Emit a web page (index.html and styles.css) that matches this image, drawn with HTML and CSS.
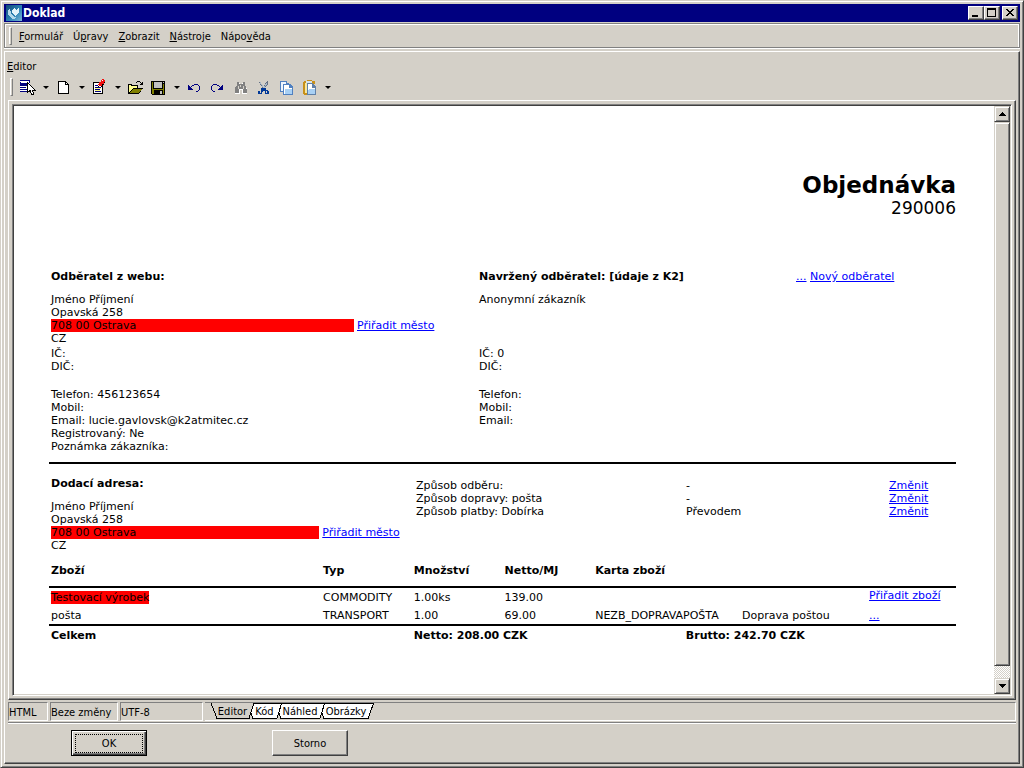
FILE: index.html
```html
<!DOCTYPE html>
<html lang="cs">
<head>
<meta charset="utf-8">
<title>Doklad</title>
<link rel="stylesheet" href="styles.css">
</head>
<body>
<div class="window">
  <header class="titlebar">
    <svg class="app-icon" width="16" height="16" viewBox="0 0 16 16"><defs><linearGradient id="sky" x1="0" y1="0" x2="1" y2="1"><stop offset="0" stop-color="#0f4775"/><stop offset=".55" stop-color="#2c83b4"/><stop offset="1" stop-color="#7db7d6"/></linearGradient></defs><rect width="16" height="16" fill="url(#sky)"/><path d="M4 3L2 6v4l4 4 5-1-4-2-2-3z" fill="#b4d8ea"/><path d="M7 4l2-1 1 2 3-2v4l-4 4-3-4z" fill="#e4f3fa"/></svg>
    <h1 class="window-title">Doklad</h1>
    <div class="window-buttons">
      <button class="win-btn" aria-label="Minimalizovat"><svg width="12" height="10" viewBox="0 0 12 10"><path d="M2 7h6v2H2z"/></svg></button>
      <button class="win-btn" aria-label="Maximalizovat"><svg width="12" height="10" viewBox="0 0 12 10"><path d="M1 0h9v9H1zM2 2v6h7V2z" fill-rule="evenodd"/></svg></button>
      <button class="win-btn win-close" aria-label="Zavřít"><svg width="12" height="10" viewBox="0 0 12 10"><path d="M2 1h2v1h1v1h2V2h1V1h2v1H9v1H8v1H7v1h1v1h1v1h1v1H8V7H7V6H5v1H4v1H2V7h1V6h1V5h1V4H4V3H3V2H2z"/></svg></button>
    </div>
  </header>
  <nav class="menubar">
    <span class="grip"></span>
    <button class="menu"><u>F</u>ormulář</button>
    <button class="menu">Ú<u>p</u>ravy</button>
    <button class="menu"><u>Z</u>obrazit</button>
    <button class="menu"><u>N</u>ástroje</button>
    <button class="menu">Nápo<u>v</u>ěda</button>
  </nav>
  <main class="panel">
    <div class="panel-label"><u>E</u>ditor</div>
    <div class="toolbar">
      <span class="grip"></span>
      <button class="tool" aria-label="Vybrat"><svg width="17" height="17" viewBox="0 0 17 17"><path d="M1 1h10v12H1z" fill="#fff"/><path d="M1 1h10v1H1zM1 3h1v1H1zM1 8h6v1H1zM1 10h7v1H1zM1 12h8v1H1zM10 1h1v3h-1z" fill="#000080"/><path d="M1 4h8v3H1z" fill="#000080"/><path d="M8.500 3.500v10l2.500-2 2 4.500 2-1-2-4h3z" fill="#fff" stroke="#000" stroke-width="1"/></svg></button>
      <button class="drop" aria-label="Další možnosti výběru"></button>
      <button class="tool" aria-label="Nový"><svg width="17" height="17" viewBox="0 0 17 17"><path d="M3 2h8v1h1v1h1v1h1v10H3z"/><path d="M4 3h6v3h3v8H4zM11 4h1v1h-1z" fill="#fff"/></svg></button>
      <button class="drop" aria-label="Další možnosti nového"></button>
      <button class="tool" aria-label="Vlastnosti"><svg width="17" height="17" viewBox="0 0 17 17"><path d="M2 3h10v12H2z"/><path d="M3 4h8v10H3z" fill="#fff"/><path d="M4 6h3v1H4zM4 8h6v1H4zM4 10h5v1H4zM4 12h6v1H4z" fill="#000080"/><path d="M4 9h6v1H4zM4 11h5v1H4z" fill="#ffff80"/><path d="M7 5h1V3h2V1h1V0h2v1h1v2h-1v2h-2v2H8V6H7z" fill="#f01010"/><path d="M11 1h1v1h-1z" fill="#fff"/><path d="M7 7h1v1H7zM10 7h2V5h1v1h-1v2h-2zM13 3h1v1h-1z"/></svg></button>
      <button class="drop" aria-label="Další vlastnosti"></button>
      <button class="tool" aria-label="Otevřít"><svg width="17" height="17" viewBox="0 0 17 17"><path d="M10 2h3v1h-3zM9 3h1v1H9zM13 3h1v1h1V3h1v3h-3V5h1V4h-1zM1 5h4v1h6v3h5l-4 6H1z"/><path d="M2 6h2v1h6v2H6l-4 4z" fill="#ffff90"/><path d="M6 10h9l-3 4H3z" fill="#808000"/></svg></button>
      <button class="tool" aria-label="Uložit"><svg width="17" height="17" viewBox="0 0 17 17"><path d="M1 2h14v14H2l-1-1z"/><path d="M2 3h1v7h10V5h1v10h-1v-4H4v4H2z" fill="#808000"/><path d="M4 3h8v6H4z" fill="#c0c0c0"/><path d="M13 3h1v1h-1zM10 12h2v3h-2z" fill="#c0c0c0"/></svg></button>
      <button class="drop" aria-label="Další možnosti uložení"></button>
      <button class="tool" aria-label="Zpět"><svg width="17" height="17" viewBox="0 0 17 17"><path fill="#000080" d="M2 6h1v1h1v1h1v1h1v1h1v1H2zM5 7h1v1H5zM6 6h2v1H6zM8 5h4v1H8zM12 6h1v1h-1zM13 7h1v4h-1zM12 11h1v1h-1zM10 12h2v1h-2z"/></svg></button>
      <button class="tool" aria-label="Znovu"><svg width="17" height="17" viewBox="0 0 17 17"><path fill="#000080" d="M14 6h-1v1h-1v1h-1v1h-1v1H9v1h5zM10 7h1v1h-1zM8 6h2v1H8zM4 5h4v1H4zM3 6h1v1H3zM2 7h1v4H2zM3 11h1v1H3zM4 12h2v1H4z"/></svg></button>
      <button class="tool" aria-label="Najít"><svg width="17" height="17" viewBox="0 0 17 17"><path d="M5 4h3v2h2V4h3v2l2 4v5h-5v-4H8v4H3v-4l2-4z" fill="#fff"/><path d="M5 3h2v2h4V3h2v3l1 2 1 3v3h-4v-4H7v4H3v-4l1-3 1-1z" fill="#808080"/><path d="M6 7h1v3H6zM11 7h1v3h-1zM8 6h1v2H8z" fill="#d4d0c8"/></svg></button>
      <button class="tool" aria-label="Vyjmout"><svg width="17" height="17" viewBox="0 0 17 17"><path d="M4 3h1l5 7H8zM12 2h1v3l-4 5H7z" fill="#647084"/><path d="M5 3l3 5M12 4l-4 6" stroke="#a8b8c8"/><path d="M6 9h5v2h2v1h1v3h-4v-3H8v1H7v2H3v-3h3zM5 12v2h1v-2zM11 12v2h1v-2z" fill="#003898" fill-rule="evenodd"/></svg></button>
      <button class="tool" aria-label="Kopírovat"><svg width="17" height="17" viewBox="0 0 17 17"><path d="M2 2h7v2h2v9H2z" fill="#5080c0"/><path d="M3 3h5v9H3z" fill="#eef6ff"/><path d="M5 5h7l3 3v8H5z" fill="#5080c0"/><path d="M6 6h5v3h3v6H6z" fill="#fff"/><path d="M7 10h7v5H7z" fill="#a8d0f4"/></svg></button>
      <button class="tool" aria-label="Vložit"><svg width="17" height="17" viewBox="0 0 17 17"><path d="M3 2h3V1h5v1h3v3h-2V4H4v10h2v2H3l-1-1V3z" fill="#c89018"/><path d="M4 4h3v10H4z" fill="#f5e7a0"/><path d="M5 2h6v2H5z" fill="#d8e4ec"/><path d="M6 4h6l3 4v8H6z" fill="#6080a8"/><path d="M7 5h4v4h3v6H7z" fill="#fff"/><path d="M8 10h6v5H7v-4h1z" fill="#a8d0f4"/></svg></button>
      <button class="drop" aria-label="Další možnosti vložení"></button>
    </div>
    <div class="frame">
      <div class="viewport">
        <article class="document">
          <header class="doc-head">
            <h2 class="doc-title">Objednávka</h2>
            <div class="doc-number">290006</div>
          </header>
          <section class="customers">
            <h3>Odběratel z webu:</h3>
            <h3>Navržený odběratel: [údaje z K2]</h3>
            <div><a href="#">...</a> <a href="#">Nový odběratel</a></div>
            <div class="address">
              <div>Jméno Příjmení</div>
              <div>Opavská 258</div>
              <div class="city city-wide"><span class="missing">708 00 Ostrava</span><a href="#">Přiřadit město</a></div>
              <div>CZ</div>
            </div>
            <div class="address span">Anonymní zákazník</div>
            <div class="ids">IČ:<br>DIČ:</div>
            <div class="ids span">IČ: 0<br>DIČ:</div>
            <div>Telefon: 456123654<br>Mobil:<br>Email: lucie.gavlovsk@k2atmitec.cz<br>Registrovaný: Ne<br>Poznámka zákazníka:</div>
            <div class="span">Telefon:<br>Mobil:<br>Email:</div>
          </section>
          <section class="delivery">
            <div class="delivery-address">
              <h3>Dodací adresa:</h3>
              <div>Jméno Příjmení</div>
              <div>Opavská 258</div>
              <div class="city"><span class="missing">708 00 Ostrava</span><a href="#">Přiřadit město</a></div>
              <div>CZ</div>
            </div>
            <div class="methods">
              <span>Způsob odběru:</span><span>-</span><a href="#">Změnit</a>
              <span>Způsob dopravy: pošta</span><span>-</span><a href="#">Změnit</a>
              <span>Způsob platby: Dobírka</span><span>Převodem</span><a href="#">Změnit</a>
            </div>
          </section>
          <table class="goods">
            <colgroup><col class="c-name"><col class="c-tenth"><col class="c-tenth"><col class="c-tenth"><col class="c-tenth"><col class="c-mid"><col class="c-desc"><col class="c-link"></colgroup>
            <thead>
              <tr><th>Zboží</th><th>Typ</th><th>Množství</th><th>Netto/MJ</th><th colspan="4">Karta zboží</th></tr>
            </thead>
            <tbody>
              <tr class="first"><td><span class="missing">Testovací výrobek</span></td><td>COMMODITY</td><td>1.00ks</td><td>139.00</td><td colspan="2"></td><td></td><td class="assign"><a href="#">Přiřadit zboží</a></td></tr>
              <tr><td>pošta</td><td>TRANSPORT</td><td>1.00</td><td>69.00</td><td colspan="2">NEZB_DOPRAVAPOŠTA</td><td>Doprava poštou</td><td><a href="#">...</a></td></tr>
            </tbody>
            <tfoot>
              <tr><th colspan="2">Celkem</th><th colspan="3">Netto: 208.00 CZK</th><th colspan="3">Brutto: 242.70 CZK</th></tr>
            </tfoot>
          </table>
        </article>
        <div class="scrollbar">
          <button class="scroll-btn" aria-label="Nahoru"><svg width="7" height="4" viewBox="0 0 7 4"><path d="M3 0h1v1h1v1h1v1h1v1H0V3h1V2h1V1h1z"/></svg></button>
          <div class="thumb"></div>
          <div class="track"></div>
          <button class="scroll-btn" aria-label="Dolů"><svg width="7" height="4" viewBox="0 0 7 4"><path d="M0 0h7v1H6v1H5v1H4v1H3V3H2V2H1V1H0z"/></svg></button>
        </div>
      </div>
    </div>
    <div class="statusbar">
      <span class="cell cell-mode">HTML</span>
      <span class="cell cell-state">Beze změny</span>
      <span class="cell cell-enc">UTF-8</span>
      <div class="tabs">
        <button class="tab tab-editor"><svg width="43" height="17" viewBox="0 0 43 17"><path class="face-on" d="M0 0L6 15.500H38L43 0"/></svg><span>Editor</span></button>
        <button class="tab tab-code"><svg width="35" height="17" viewBox="0 0 35 17"><path class="face" d="M0 .5L6 15.500H30L34.500 .5z"/></svg><span>Kód</span></button>
        <button class="tab tab-preview"><svg width="50" height="17" viewBox="0 0 50 17"><path class="face" d="M0 .5L6 15.500H45L49.500 .5z"/></svg><span>Náhled</span></button>
        <button class="tab tab-images"><svg width="56" height="17" viewBox="0 0 56 17"><path class="face" d="M0 .5L6 15.500H50L55.500 .5z"/></svg><span>Obrázky</span></button>
      </div>
    </div>
    <footer class="actions">
      <button class="push push-default"><span class="focus">OK</span></button>
      <button class="push">Storno</button>
    </footer>
  </main>
</div>
</body>
</html>
```
FILE: styles.css
```css
* { box-sizing: border-box; }
body {
  margin: 0;
  background: #d4d0c8;
  color: #000;
  font: 11px/13px "DejaVu Sans Condensed", "DejaVu Sans", sans-serif;
}
button {
  margin: 0;
  padding: 0;
  border: 0;
  background: none;
  color: inherit;
  font: inherit;
}
svg { display: block; shape-rendering: crispEdges; }
h1, h2, h3 { margin: 0; font-size: inherit; }
a { color: #0000ff; }

.window {
  display: flex;
  flex-direction: column;
  min-height: 100vh;
  padding: 3px;
  border: 1px solid;
  border-color: #d4d0c8 #404040 #404040 #d4d0c8;
  box-shadow: inset 1px 1px #fff, inset -1px -1px #808080;
}
.titlebar {
  display: flex;
  align-items: center;
  height: 18px;
  padding: 0 2px;
  background: #000080;
  color: #fff;
}
.window-title {
  flex: 1;
  padding-left: 1px;
  font-size: 12px;
  font-weight: bold;
}
.window-buttons { display: flex; }
.win-btn {
  width: 16px;
  height: 14px;
  padding: 1px;
  background: #d4d0c8;
  border: 1px solid;
  border-color: #fff #404040 #404040 #fff;
  box-shadow: inset -1px -1px #808080;
}
.win-close { margin-left: 2px; }

.menubar {
  display: flex;
  align-items: center;
  gap: 10px;
  height: 25px;
  margin-top: 1px;
  padding-left: 4px;
  border: 1px solid #808080;
  box-shadow: inset 1px 1px #fff, inset -1px 0 #fff, 0 1px #fff;
}
.menu { padding-top: 2px; }
.grip {
  width: 3px;
  height: 18px;
  border: 1px solid;
  border-color: #fff #808080 #808080 #fff;
}
.menubar .grip { margin-right: -3px; }
u { text-underline-offset: 1px; }

.panel {
  flex: 1;
  display: flex;
  flex-direction: column;
  margin-top: 3px;
  padding: 8px 3px 5px 3px;
  border: 1px solid;
  border-color: #fff #404040 #404040 #fff;
  box-shadow: inset -1px -1px #808080;
}
.panel-label { margin-left: -1px; }
.toolbar {
  display: flex;
  align-items: center;
  height: 27px;
  padding-top: 1px;
  padding-left: 2px;
}
.toolbar .grip { margin-right: 3px; }
.tool {
  display: flex;
  justify-content: center;
  width: 23px;
}
.drop {
  display: flex;
  justify-content: center;
  width: 13px;
}
.drop::before {
  content: "";
  border: 3px solid transparent;
  border-top-color: #000;
  border-bottom: 0;
}

.frame {
  flex: 1;
  display: flex;
  padding: 3px;
  border: 1px solid;
  border-color: #fff #404040 #404040 #fff;
  box-shadow: inset -1px -1px #808080;
}
.viewport {
  flex: 1;
  display: flex;
  background: #fff;
  border: 1px solid;
  border-color: #808080 #fff #fff #808080;
  box-shadow: inset 1px 1px #404040, inset -1px -1px #d4d0c8;
  padding: 1px;
}
.document {
  flex: 1;
  padding: 66px 38px 0 35px;
  font-family: "DejaVu Sans", sans-serif;
}
.doc-head { text-align: right; margin-bottom: 53px; }
.doc-title { font-size: 23px; line-height: 27px; }
.doc-number { font-size: 17px; line-height: 18px; }
.customers {
  display: grid;
  grid-template-columns: 428fr 317fr 160fr;
  padding: 0 0 9px 2px;
  border-bottom: 2px solid #000;
}
.customers h3 { margin-bottom: 10px; }
.span { grid-column: 2 / 4; }
.address { margin-bottom: 2px; }
.ids { margin-bottom: 15px; }
.city {
  display: grid;
  grid-template-columns: 269fr 94fr;
  column-gap: 3px;
}
.city-wide { grid-template-columns: 303fr 122fr; }
.missing { background: #ff0000; }

.delivery {
  display: grid;
  grid-template-columns: 365fr 540fr;
  padding: 13px 0 0 2px;
}
.delivery h3 { margin-bottom: 10px; }
.methods {
  display: grid;
  grid-template-columns: 270fr 203fr 67fr;
  align-content: start;
  padding-top: 2px;
}
.goods {
  width: 100%;
  margin-top: 10px;
  border-collapse: collapse;
  table-layout: fixed;
}
.goods th, .goods td {
  padding: 2px 0 2px 2px;
  text-align: left;
  vertical-align: middle;
  white-space: nowrap;
}
.goods thead th { padding-bottom: 9px; }
.goods thead { border-bottom: 2px solid #000; }
.goods tbody { border-bottom: 2px solid #000; }
.goods tfoot th { padding-top: 3px; }
.goods .first td { padding: 3px 0 3px 2px; }
.goods .first .assign { padding: 1px 0 5px 2px; }
.c-name { width: 30%; }
.c-tenth { width: 10%; }
.c-mid { width: 6.2%; }
.c-desc { width: 14%; }
.c-link { width: 9.8%; }

.scrollbar {
  display: flex;
  flex-direction: column;
  width: 16px;
  background: #d4d0c8;
}
.scroll-btn, .thumb {
  display: flex;
  align-items: center;
  justify-content: center;
  background: #d4d0c8;
  border: 1px solid;
  border-color: #d4d0c8 #404040 #404040 #d4d0c8;
  box-shadow: inset 1px 1px #fff, inset -1px -1px #808080;
}
.scroll-btn { height: 16px; }
.thumb { flex: 544; }
.track {
  flex: 12;
  background: repeating-conic-gradient(#fff 0 25%, #d4d0c8 0 50%) 0 0 / 2px 2px;
}

.statusbar {
  display: flex;
  gap: 2px;
  height: 19px;
  margin-top: 2px;
}
.cell, .tabs {
  border: 1px solid;
  border-color: #808080 #fff #fff #808080;
}
.cell { padding-top: 3px; white-space: nowrap; }
.cell-mode { width: 40px; }
.cell-state { width: 68px; }
.cell-enc { width: 83px; }
.tabs {
  flex: 1;
  display: flex;
  padding-left: 6px;
  border-left: 0;
}
.tab {
  position: relative;
  height: 17px;
  margin-right: -7px;
}
.tab svg { position: absolute; top: 0; left: 0; }
.tab span { position: relative; }
.tab-editor { width: 43px; z-index: 4; }
.tab-code { width: 35px; z-index: 3; }
.tab-preview { width: 50px; z-index: 2; }
.tab-images { width: 56px; z-index: 1; }
.face { fill: #fff; stroke: #000; }
.face-on { fill: #d4d0c8; stroke: #000; }

.actions {
  display: flex;
  gap: 125px;
  margin-top: 1px;
  padding: 7px 0 2px 63px;
  border-top: 1px solid #808080;
  box-shadow: inset 0 1px #fff;
}
.push {
  width: 76px;
  height: 26px;
  border: 1px solid;
  border-color: #fff #404040 #404040 #fff;
  box-shadow: inset -1px -1px #808080;
}
.push-default {
  padding: 3px;
  border-color: #000;
  box-shadow: inset 1px 1px #fff, inset -1px -1px #404040, inset -2px -2px #808080;
}
.focus {
  display: block;
  padding: 2px 0;
  border: 1px dotted #000;
}
```
